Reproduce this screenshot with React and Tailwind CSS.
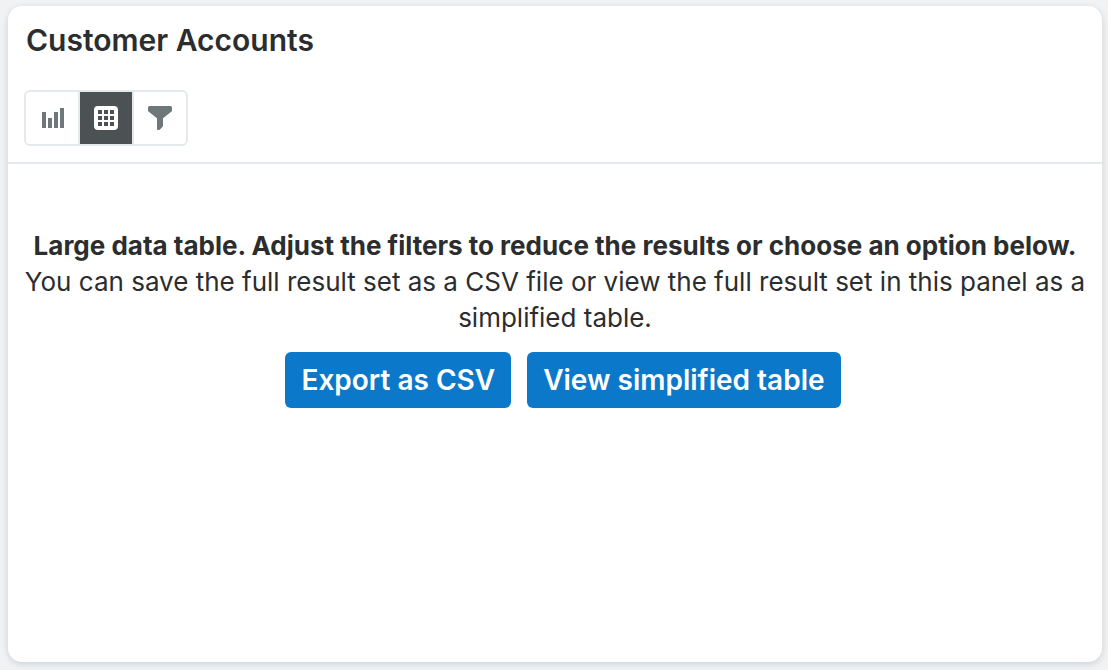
import { useState } from "react";
import clsx from "clsx";

function BarsIcon() {
  return (
    <svg viewBox="0 0 24 24" className="size-6" fill="currentColor" shapeRendering="crispEdges" aria-hidden="true">
      <path d="M2 6h4v16H2zM8 12h4v10H8zM14 6h4v16h-4zM20 2h4v20h-4z" />
    </svg>
  );
}

function GridIcon() {
  return (
    <svg viewBox="0 0 24 24" className="size-6" fill="currentColor" aria-hidden="true">
      <path
        fillRule="evenodd"
        d="M4 0h16a4 4 0 0 1 4 4v16a4 4 0 0 1-4 4H4a4 4 0 0 1-4-4V4a4 4 0 0 1 4-4zM4 4v4h4V4zM10 4v4h4V4zM16 4v4h4V4zM4 10v4h4v-4zM10 10v4h4v-4zM16 10v4h4v-4zM4 16v4h4v-4zM10 16v4h4v-4zM16 16v4h4v-4z"
      />
    </svg>
  );
}

function FunnelIcon() {
  return (
    <svg viewBox="0 0 24 24" className="size-6" fill="currentColor" aria-hidden="true">
      <path d="M1.5 0h21A1.5 1.5 0 0 1 24 1.5v2.7a2 2 0 0 1-.8 1.6L15 12.3v7.2a2 2 0 0 1-.6 1.4l-2.4 2.5a2 2 0 0 1-1.4.6H10a1 1 0 0 1-1-1V12.300L.8 5.800A2 2 0 0 1 0 4.200V1.500A1.500 1.500 0 0 1 1.500 0z" />
    </svg>
  );
}

const views = [
  { id: "chart", label: "Chart", Icon: BarsIcon },
  { id: "table", label: "Table", Icon: GridIcon },
  { id: "filters", label: "Filters", Icon: FunnelIcon },
];

function ViewSwitch({ active, onChange }) {
  return (
    <div
      role="group"
      aria-label="Panel view"
      className="flex w-fit divide-x-2 divide-[#e4e9ec] overflow-hidden rounded-md border-2 border-[#e4e9ec]"
    >
      {views.map(({ id, label, Icon }) => (
        <button
          key={id}
          type="button"
          aria-label={label}
          aria-pressed={active === id}
          onClick={() => onChange(id)}
          className={clsx(
            "box-content flex size-[52px] items-center justify-center",
            active === id ? "bg-[#4c5153] text-white" : "bg-white text-[#6f777b]"
          )}
        >
          <Icon />
        </button>
      ))}
    </div>
  );
}

function ActionButton({ children }) {
  return (
    <button
      type="button"
      className="rounded-md bg-[#0b78ca] px-4 py-2 text-[28px] leading-10 font-semibold text-white hover:bg-[#0969b1]"
    >
      {children}
    </button>
  );
}

export default function App() {
  const [view, setView] = useState("table");

  return (
    <main className="flex min-h-screen bg-[#f0f2f4] pt-1.5 pr-1.5 pb-2 pl-2 font-['Inter',sans-serif] text-[#2b2d2e]">
      <section className="flex-1 rounded-[14px] bg-white shadow-[0_2px_6px_rgba(60,80,90,0.2)]">
        <header className="border-b-2 border-[#e4e9ec] px-4 pt-4 pb-4">
          <h1 className="mb-8 px-0.5 text-[30px] leading-9 font-semibold">Customer Accounts</h1>
          <ViewSwitch active={view} onChange={setView} />
        </header>

        <div className="px-4 pt-16 text-center text-[26px] leading-9">
          <p className="font-bold">
            Large data table. Adjust the filters to reduce the results or choose an option below.
          </p>
          <p>
            You can save the full result set as a CSV file or view the full result set in this panel as a simplified
            table.
          </p>
          <div className="mt-4 flex flex-wrap justify-center gap-4 pl-4">
            <ActionButton>Export as CSV</ActionButton>
            <ActionButton>View simplified table</ActionButton>
          </div>
        </div>
      </section>
    </main>
  );
}
